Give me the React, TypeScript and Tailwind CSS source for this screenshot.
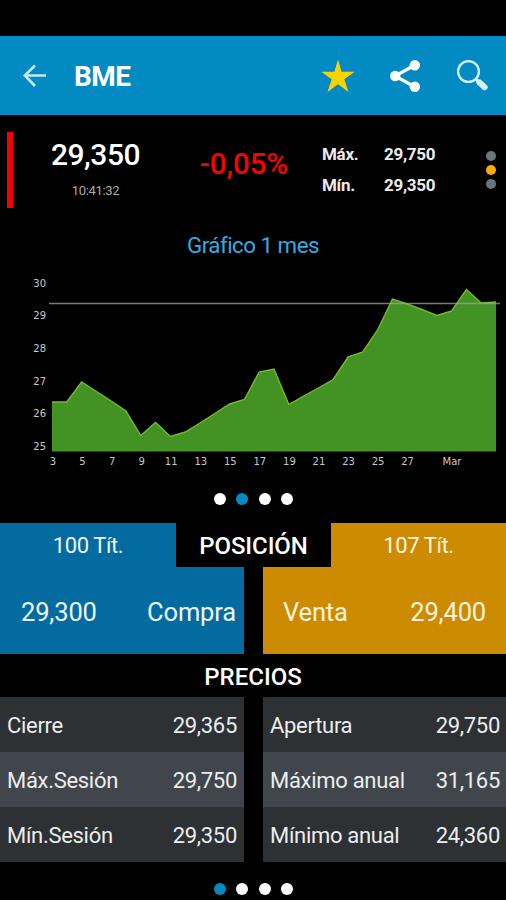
import React from "react";
import clsx from "clsx";

const STEP = 14.8;

const chartPoints = [
  402, 402, 382, 391.5, 401, 411, 435.5, 422.5, 436.5, 432, 423, 413.5, 404,
  399.5, 372, 369, 404.5, 396, 388, 379.5, 357, 352, 330, 299, 304, 309.5,
  315.5, 311, 289.5, 303, 302,
];

const yLabels = ["30", "29", "28", "27", "26", "25"];

const xLabels = ["3", "5", "7", "9", "11", "13", "15", "17", "19", "21", "23", "25", "27"];

const leftRows = [
  { label: "Cierre", value: "29,365" },
  { label: "Máx.Sesión", value: "29,750" },
  { label: "Mín.Sesión", value: "29,350" },
];

const rightRows = [
  { label: "Apertura", value: "29,750" },
  { label: "Máximo anual", value: "31,165" },
  { label: "Mínimo anual", value: "24,360" },
];

function Header() {
  return (
    <header className="flex h-[79px] items-center bg-[#028bc2] text-white">
      <svg className="ml-[22px] h-7 w-6" viewBox="0 0 24 28" fill="none" stroke="#c5e8f5" strokeWidth="2.6">
        <path d="M13 3.5 2.8 13.5 13 24M2.8 13.5H24" />
      </svg>
      <h1 className="mt-0.5 ml-7 text-[28px] leading-none font-bold tracking-[-0.6px]">BME</h1>
      <svg className="ml-auto h-[34px] w-[34px]" viewBox="0 0 34 34" fill="#f8d203">
        <path d="M17 .5 20.6 12.7H33.7L23.3 20.3 27.5 33 17 25.2 6.5 33 10.7 20.3.3 12.7H13.4z" />
      </svg>
      <svg className="ml-[35px] h-8 w-[30px]" viewBox="0 0 30 32" fill="white">
        <path d="M25 5 5 16 25 27" fill="none" stroke="white" strokeWidth="3.2" />
        <circle cx="5.2" cy="16" r="5.2" />
        <circle cx="24.8" cy="5.2" r="5.2" />
        <circle cx="24.8" cy="26.8" r="5.2" />
      </svg>
      <svg className="mr-[18px] ml-9 h-8 w-8" viewBox="0 0 32 32" fill="none" stroke="#d3f0fd">
        <circle cx="12.5" cy="11.5" r="10.4" strokeWidth="2.3" />
        <path d="m19.5 18.8 3 3" strokeWidth="3" />
        <path d="m23.4 22.4 5.2 4.9" strokeWidth="6" strokeLinecap="round" />
      </svg>
    </header>
  );
}

function Quote() {
  return (
    <section className="mt-[17px] flex h-[76px] items-start">
      <div className="ml-[7px] h-full w-1.5 bg-[#f90000]" />
      <div className="ml-[21px] w-[123px] text-center">
        <p className="mt-[5px] text-[30px] leading-9 font-medium tracking-[-0.5px]">29,350</p>
        <p className="mt-2.5 text-[13px] leading-4 tracking-[-0.3px] text-[#a9a9a9]">10:41:32</p>
      </div>
      <p className="mt-[14px] ml-[37px] w-[100px] text-center text-[29.5px] leading-9 font-medium text-[#fb0000]">
        -0,05%
      </p>
      <div className="mt-[11px] ml-[28px] grid w-[114px] grid-cols-[62px_52px] gap-y-[9px] text-[17px] leading-[22px] font-bold tracking-[-0.3px] text-[#ececec]">
        <span>Máx.</span>
        <span>29,750</span>
        <span>Mín.</span>
        <span>29,350</span>
      </div>
      <div className="mt-[19px] ml-[49.5px] flex flex-col gap-1">
        <i className="size-2.5 rounded-full bg-[#6c7779]" />
        <i className="size-2.5 rounded-full bg-[#ffa90a]" />
        <i className="size-2.5 rounded-full bg-[#69737c]" />
      </div>
    </section>
  );
}

function Chart() {
  const line = chartPoints.map((y, i) => `${52 + i * STEP},${y - 270}`).join(" ");

  return (
    <svg className="block h-[205px] w-full" viewBox="0 0 506 205">
      <polygon points={`52,181.5 ${line} 496,181.5`} fill="#429323" />
      <polyline points={line} fill="none" stroke="#78b833" strokeWidth="1.4" />
      <path d="M49 33.5H500" stroke="#a0a0a0" strokeOpacity=".75" strokeWidth="1.6" />
      <g fill="#c9c9c9" className="font-['DejaVu_Sans',sans-serif] text-[10px]">
        {yLabels.map((label, i) => (
          <text key={label} x="46" y={16.5 + i * 32.7} textAnchor="end">
            {label}
          </text>
        ))}
        {xLabels.map((label, i) => (
          <text key={label} x={53 + i * 29.55} y="195" textAnchor="middle">
            {label}
          </text>
        ))}
        <text x="452" y="195" textAnchor="middle">
          Mar
        </text>
      </g>
    </svg>
  );
}

function Dots({ active }: { active: number }) {
  return (
    <div className="flex justify-center gap-[10.5px] pl-px">
      {[0, 1, 2, 3].map((i) => (
        <i key={i} className={clsx("size-3 rounded-full", i === active ? "bg-[#0489c5]" : "bg-white")} />
      ))}
    </div>
  );
}

function Position() {
  return (
    <section className="text-[#edf6fc]">
      <div className="flex h-11 text-[22px] leading-[46px] tracking-[-0.4px]">
        <p className="w-[176px] bg-[#036b9f] text-center">100 Tít.</p>
        <h2 className="flex-1 text-center text-[24px] font-medium tracking-[-0.1px] text-white">POSICIÓN</h2>
        <p className="w-[175px] bg-[#cc8b00] text-center text-[#fff3df]">107 Tít.</p>
      </div>
      <div className="flex h-[87px] justify-between text-[25.5px] leading-[90px] tracking-[-0.15px]">
        <div className="flex w-[244px] justify-between bg-[#036b9f] pr-2 pl-[21px]">
          <span>29,300</span>
          <span>Compra</span>
        </div>
        <div className="flex w-[243px] justify-between bg-[#cc8b00] pr-5 pl-5 text-[#fff3df]">
          <span>Venta</span>
          <span>29,400</span>
        </div>
      </div>
    </section>
  );
}

function PriceTable({ rows, className }: { rows: typeof leftRows; className: string }) {
  return (
    <dl className={className}>
      {rows.map((row) => (
        <div
          key={row.label}
          className="flex h-[55px] items-center justify-between bg-[#2d3134] pt-0.5 pl-[7px] text-[22px] tracking-[-0.3px] even:bg-[#40464c]"
        >
          <dt>{row.label}</dt>
          <dd>{row.value}</dd>
        </div>
      ))}
    </dl>
  );
}

export default function App() {
  return (
    <div className="h-[900px] w-[506px] overflow-hidden bg-black pt-9 font-[Roboto,sans-serif] text-white">
      <Header />
      <Quote />
      <h2 className="mt-[22px] h-10 text-center text-[22.3px] leading-[30px] tracking-[-0.5px] text-[#35abe0]">
        Gráfico 1 mes
      </h2>
      <Chart />
      <div className="my-[18px]">
        <Dots active={1} />
      </div>
      <Position />
      <h2 className="h-[43px] text-center text-[24px] leading-[46px] font-medium">PRECIOS</h2>
      <div className="flex justify-between text-[#ebedee]">
        <PriceTable rows={leftRows} className="w-[244px] *:pr-[7px]" />
        <PriceTable rows={rightRows} className="w-[243px] *:pr-1.5" />
      </div>
      <div className="mt-[21px]">
        <Dots active={0} />
      </div>
    </div>
  );
}
